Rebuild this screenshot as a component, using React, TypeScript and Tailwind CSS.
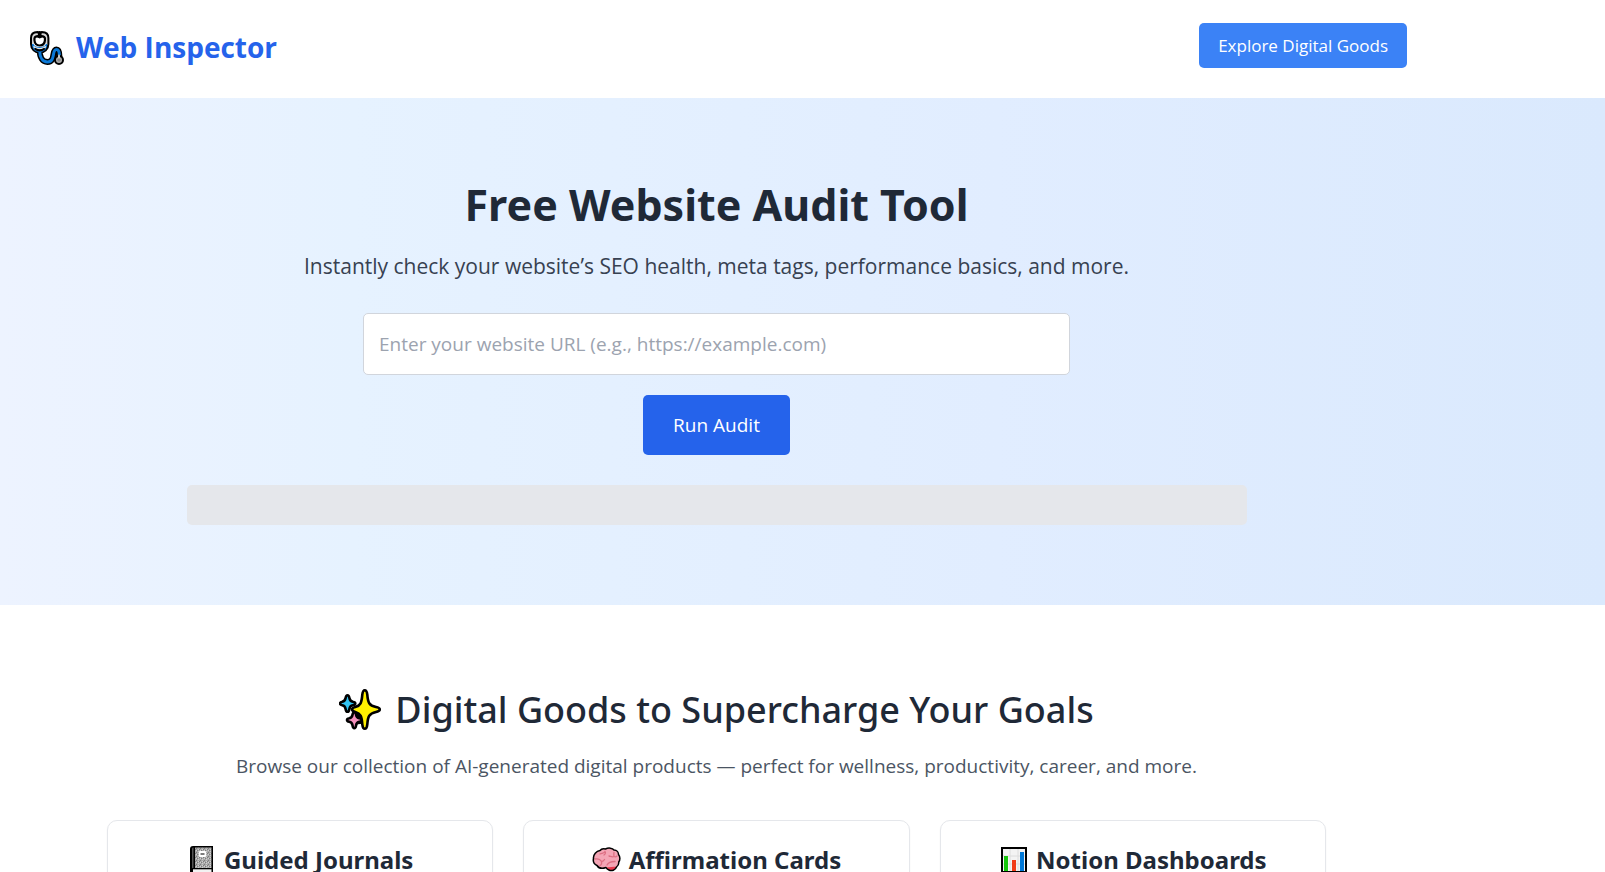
import type { ReactNode } from "react";

function StethoscopeIcon() {
  return (
    <svg viewBox="0 0 34 34" className="h-[34px] w-[34px] shrink-0" fill="none" strokeLinecap="round" strokeLinejoin="round" aria-hidden="true">
      <path
        d="M7.500 3C4.300 3 3 4.500 3 7v6c0 4 3 6.600 6.700 6.600s6.700-2.600 6.700-6.600V7c0-2.500-1.300-4-4.500-4M9.700 19.600c0 7 3 11.400 7.700 11.400 8.600 0 4-12.500 9-12.500 2.600 0 3 2.500 3 7"
        stroke="#000"
        strokeWidth="6"
      />
      <path d="M7 3.200C4 3.200 3 4.700 3 7v6.500h13.400V7c0-2.300-1-3.800-4-3.800" stroke="#d6d6d6" strokeWidth="2" />
      <path d="M2 13h15.200c0 5-3 8-7.600 8S2 18 2 13z" fill="#0a78d7" />
      <path d="M9.700 19.600c0 7 3 11.400 7.700 11.400 8.600 0 4-12.500 9-12.500 2.400 0 3 2.500 3 6" stroke="#0a78d7" strokeWidth="3" />
      <path d="M3.800 9.500h11.800v4.200c-2 3-9.800 3-11.800 0z" fill="#fff" />
      <path d="M7 5.500c2 0 2.200.8 2.700.8s.7-.8 2.700-.8c2.300 0 2.800 1.500 2.500 4-.3 3-2.300 5-5.200 5s-4.900-2-5.200-5c-.3-2.500.2-4 2.500-4z" fill="#fff" stroke="#000" strokeWidth="2.200" />
      <path d="M4 15.800c2.800 2.500 8.600 2.500 11.400 0" stroke="#e4e4e4" strokeWidth="1.600" />
      <path d="M5.500 18c2.300 1.800 6.100 1.800 8.400 0" stroke="#000" strokeWidth="2.200" />
      <path d="M9.700 1v4.500" stroke="#000" strokeWidth="2" />
      <circle cx="29" cy="29" r="4" fill="#b0b0b0" stroke="#000" strokeWidth="2" />
      <path d="M29 24.500v2.500" stroke="#ccc" strokeWidth="2" />
      <circle cx="29" cy="29" r="1.800" fill="#888" />
    </svg>
  );
}

function SparklesIcon() {
  return (
    <svg viewBox="0 0 42 41" className="h-[41px] w-[42px] shrink-0" stroke="#000" strokeWidth="2.600" strokeLinejoin="round" aria-hidden="true">
      <path d="M15 23l10-2 2 12-8 1z" fill="#000" />
      <path d="M8.500 6.200c1.300 0 1.600 1 1.900 2.800.4 2.500 1 3.200 3.400 3.700 1.700.3 2.500.7 2.500 1.800s-.8 1.500-2.500 1.800c-2.400.5-3 1.200-3.400 3.700-.3 1.800-.6 2.800-1.900 2.800s-1.600-1-1.900-2.800c-.4-2.500-1-3.200-3.400-3.700-1.700-.3-2.200-.7-2.200-1.800s.5-1.500 2.200-1.800c2.400-.5 3-1.200 3.400-3.700.3-1.800.6-2.800 1.900-2.800z" fill="#33c5f4" />
      <path d="M15.300 23.200c1.300 0 1.500 1 1.800 2.600.4 2.300 1 3 3.200 3.500 1.600.3 2.500.7 2.500 1.700s-.9 1.500-2.500 1.800c-2.200.5-2.800 1.200-3.200 3.500-.3 1.600-.5 2.900-1.800 2.900s-1.500-1.300-1.800-2.900c-.4-2.300-1-3-3.200-3.500-1.500-.3-2.300-.7-2.300-1.800s.8-1.400 2.300-1.700c2.200-.5 2.800-1.200 3.200-3.500.3-1.600.5-2.600 1.800-2.600z" fill="#f490bd" />
      <path d="M25.800 1.300c1.800 0 2.200 1.500 2.500 4.400.6 8 1.700 10.800 8.700 12.400 2.600.6 3.800 1 3.800 2.400s-1.200 1.800-3.800 2.400c-7 1.600-8.100 4.400-8.700 12.400-.3 2.900-.7 4.400-2.500 4.400s-2.200-1.500-2.500-4.400c-.6-8-1.700-10.800-7-12.400-2.200-.6-3.200-1-3.200-2.400s1-1.800 3.200-2.400c5.300-1.600 6.400-4.400 7-12.400.3-2.900.7-4.400 2.500-4.400z" fill="#fff100" />
    </svg>
  );
}

function NotebookIcon() {
  return (
    <svg viewBox="0 0 29 30" className="h-[30px] w-[29px] shrink-0" aria-hidden="true">
      <defs>
        <pattern id="speckle" width="4" height="4" patternUnits="userSpaceOnUse">
          <rect width="4" height="4" fill="#a9a9a9" />
          <path d="M0 0h1v1H0zM2 1h1v1H2zM1 3h1v1H1z" fill="#7c7c7c" />
          <path d="M3 2h1v1H3zM1 1h1v1H1zM3 0h1v1H3z" fill="#cfcfcf" />
        </pattern>
      </defs>
      <path d="M6 1h20v28H6c-2 0-3-1-3-3V4c0-2 1-3 3-3z" fill="#000" />
      <path d="M5 4c0-1 .5-1.500 1.500-1.500V23H5z" fill="#555" />
      <path d="M8 2.500h16.500v20.500H8z" fill="url(#speckle)" />
      <path d="M6 24.300h18.500v2.700H6z" fill="#f2f2f2" />
      <rect x="12" y="6" width="7" height="6" rx="1" fill="#fff" />
      <path d="M13.500 9h4" stroke="#222" strokeWidth="1.200" />
    </svg>
  );
}

function BrainIcon() {
  return (
    <svg viewBox="0 0 29 30" className="h-[30px] w-[29px] shrink-0" strokeLinecap="round" strokeLinejoin="round" aria-hidden="true">
      <path
        d="M8 5.500C9.500 3.500 12 3.500 13.500 4c3-1.500 7-1 8.500 1 3 0 4.500 2.500 4.500 4.500 1.800 2 1.800 5.500.2 7.500.3 2.500-.7 4-2.200 5-1 3-5 4.500-7.500 3-1.500-.6-2.500-1.600-3-2.500-4 1.500-7.500.5-9-2C2 19 .8 16.500 1.500 13.500 1 9.500 4.500 6 8 5.500z"
        fill="#f4a5b5"
      />
      <path d="M14 22.500c3-.3 7.500-.8 10.500-.8-1 3.500-5 4.800-7.500 3.500-1.500-.7-2.500-1.700-3-2.700z" fill="#e8394f" />
      <path d="M8 9c2-1 4-.5 5-2.500M13 6.500c1 1.500 0 3-1 3.500M3 14c3-.5 5 0 6.500 2.500M9.500 16.500c1.500 0 2.500-1 3-2M9.500 16.500c.5 2-.5 3.500-1.500 4M17 11c2 .5 3 1.500 5 .5M22 7.500c-.5 1.500 0 3 0 4 1 .5 2.500 0 3-.5M15 20c1.500-3 4-3.500 8-3.500" fill="none" stroke="#dd6f83" strokeWidth="1.300" />
      <path
        d="M8 5.500C9.500 3.500 12 3.500 13.500 4c3-1.500 7-1 8.500 1 3 0 4.500 2.500 4.500 4.500 1.800 2 1.800 5.500.2 7.500.3 2.500-.7 4-2.200 5-1 3-5 4.500-7.500 3-1.500-.6-2.500-1.600-3-2.500-4 1.500-7.500.5-9-2C2 19 .8 16.500 1.500 13.500 1 9.500 4.500 6 8 5.500z"
        fill="none"
        stroke="#000"
        strokeWidth="1.500"
      />
    </svg>
  );
}

function BarChartIcon() {
  return (
    <svg viewBox="0 0 29 30" className="h-[30px] w-[29px] shrink-0" aria-hidden="true">
      <rect x="3" y="3" width="24" height="24" fill="#f3f3f3" stroke="#000" strokeWidth="2" />
      <path d="M11 4v22M19 4v22M4 11h22M4 19h22" stroke="#dcdcdc" strokeWidth="1" />
      <path d="M5 11h4v15H5z" fill="#16c60c" />
      <path d="M13 15h4v11h-4z" fill="#f03a17" />
      <path d="M21 7h4v19h-4z" fill="#0078d7" />
    </svg>
  );
}

const products: { title: string; icon: ReactNode }[] = [
  { title: "Guided Journals", icon: <NotebookIcon /> },
  { title: "Affirmation Cards", icon: <BrainIcon /> },
  { title: "Notion Dashboards", icon: <BarChartIcon /> },
];

export default function App() {
  return (
    <div className="h-screen overflow-hidden bg-white font-['Open_Sans','Noto_Sans',sans-serif] text-[#1f2937]">
      <header className="flex items-start justify-between pt-[23px] pr-[198px] pb-[26px] pl-[30px]">
        <div className="flex items-center gap-3">
          <StethoscopeIcon />
          <span className="text-[28px] leading-[49px] font-bold text-[#2563eb]">Web Inspector</span>
        </div>
        <a href="#digital-goods" className="rounded-[5px] bg-[#3b82f6] px-[19px] text-[17px] leading-[45px] text-white">
          Explore Digital Goods
        </a>
      </header>

      <section className="bg-[linear-gradient(to_right,#edf3ff_0%,#e6f2ff_22%,#e1edff_62%,#dae9fd_100%)] pt-[76px] pr-[172px] pb-20 text-center">
        <h1 className="font-['Noto_Sans',sans-serif] text-[43px] leading-[62px] font-bold">Free Website Audit Tool</h1>
        <p className="mt-3 text-[21px] leading-9 text-[#374151]">
          Instantly check your website’s SEO health, meta tags, performance basics, and more.
        </p>
        <form className="mt-[29px] flex flex-col items-center gap-5" onSubmit={(event) => event.preventDefault()}>
          <input
            type="url"
            aria-label="Website URL"
            placeholder="Enter your website URL (e.g., https://example.com)"
            className="h-[62px] w-full max-w-[707px] rounded-[5px] border border-gray-300 bg-white px-[15px] text-[19px] placeholder:text-[#9ca3af]"
          />
          <button type="submit" className="h-[60px] rounded-[5px] bg-[#2563eb] px-[30px] text-[19px] text-white">
            Run Audit
          </button>
        </form>
        <div className="mx-auto mt-[30px] h-10 max-w-[1060px] rounded-[5px] bg-[#e5e7eb]" />
      </section>

      <section id="digital-goods" className="pt-[76px] pr-[172px] text-center">
        <h2 className="flex items-center justify-center gap-3.5 font-['Noto_Sans',sans-serif] text-[36px] leading-[57px] font-medium">
          <SparklesIcon />
          Digital Goods to Supercharge Your Goals
        </h2>
        <p className="mt-[13px] text-[19px] leading-[30px] text-[#4b5563]">
          Browse our collection of AI-generated digital products — perfect for wellness, productivity, career, and more.
        </p>
        <div className="mx-auto mt-[39px] grid max-w-[1219px] grid-cols-3 gap-[30px]">
          {products.map((product) => (
            <article key={product.title} className="rounded-[10px] border border-gray-200 bg-white p-6 shadow-xs">
              <h3 className="flex items-center justify-center gap-2 font-['Noto_Sans',sans-serif] text-2xl leading-[30px] font-bold">
                {product.icon}
                {product.title}
              </h3>
            </article>
          ))}
        </div>
      </section>
    </div>
  );
}
